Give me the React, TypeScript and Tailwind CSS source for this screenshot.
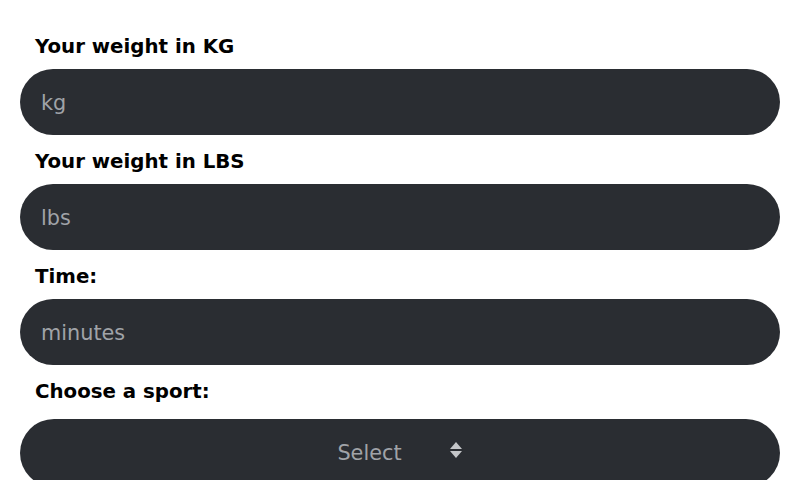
export default function App() {
  const fields = [
    { label: 'Your weight in KG', placeholder: 'kg' },
    { label: 'Your weight in LBS', placeholder: 'lbs' },
    { label: 'Time:', placeholder: 'minutes' },
  ];

  return (
    <div
      className="w-[800px] h-[480px] overflow-hidden bg-white px-5 pt-[34px]"
      style={{ fontFamily: '"DejaVu Sans", sans-serif' }}
    >
      {fields.map((f) => (
        <div key={f.label} className="mb-[14px]">
          <label className="block pl-[15px] pt-[1px] text-[19.8px] leading-[24px] font-bold text-black mb-[10px]">
            {f.label}
          </label>
          <input
            placeholder={f.placeholder}
            className="block w-full h-[66px] rounded-full bg-[#2a2d32] pl-[21px] pt-[2px] text-[20.8px] text-white placeholder:text-[#a0a3a8] outline-none"
          />
        </div>
      ))}
      <label className="block pl-[15px] pt-[1px] text-[19.8px] leading-[24px] font-bold text-black mb-[15px]">
        Choose a sport:
      </label>
      <div className="flex h-[68px] w-full items-center justify-center gap-[47px] rounded-full bg-[#2a2d32] pt-[2px] text-[20.8px] text-[#a0a3a8]">
        <span>Select</span>
        <svg width="14" height="16" viewBox="0 0 14 16" className="-mt-[8px]">
          <path d="M7 0 L13 7 L1 7 Z" fill="#c4c6c9" />
          <path d="M1 9 L13 9 L7 16 Z" fill="#c4c6c9" />
        </svg>
      </div>
    </div>
  );
}
